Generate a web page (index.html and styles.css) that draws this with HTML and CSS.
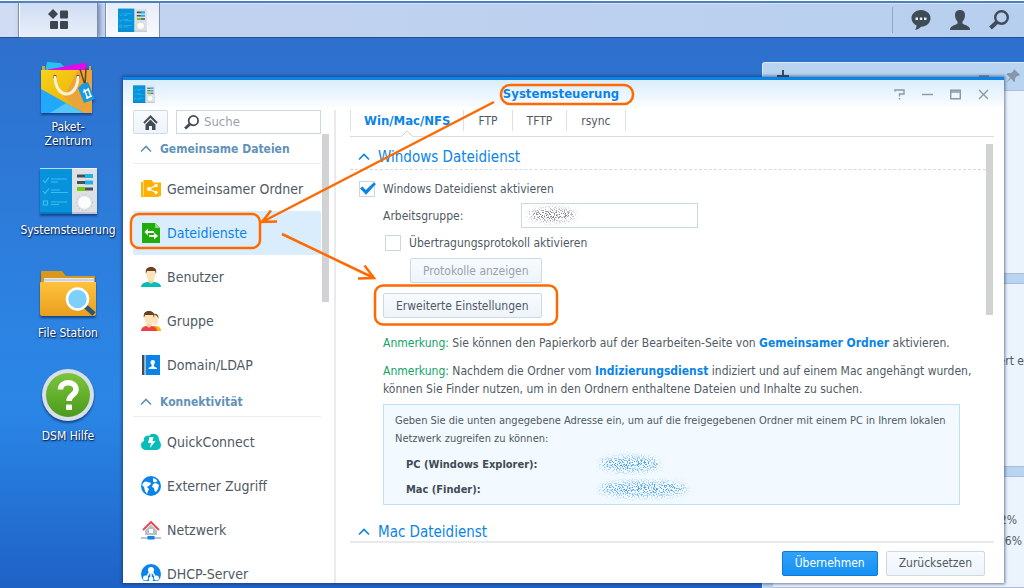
FILE: index.html
```html
<!DOCTYPE html>
<html lang="de">
<head>
<meta charset="utf-8">
<title>Systemsteuerung</title>
<link rel="stylesheet" href="styles.css">
</head>
<body>
<svg class="defs" aria-hidden="true">
  <defs>
    <filter id="grain" x="-15%" y="-40%" width="130%" height="180%">
      <feTurbulence type="fractalNoise" baseFrequency="0.8" numOctaves="3" seed="7" result="n"/>
      <feColorMatrix in="n" type="matrix" values="0 0 0 0 0  0 0 0 0 0  0 0 0 0 0  8 0 0 0 -4" result="m"/>
      <feGaussianBlur in="SourceGraphic" stdDeviation="3" result="b"/>
      <feComposite in="b" in2="m" operator="in"/>
    </filter>
    <linearGradient id="bagGold" x1="0" y1="0" x2="1" y2="1"><stop offset="0" stop-color="#f8d21c"/><stop offset="1" stop-color="#e6a800"/></linearGradient>
    <linearGradient id="folder" x1="0" y1="0" x2="0" y2="1"><stop offset="0" stop-color="#ffc23c"/><stop offset="1" stop-color="#e89f1d"/></linearGradient>
    <linearGradient id="help" x1="0" y1="0" x2="0" y2="1"><stop offset="0" stop-color="#7cc53c"/><stop offset="1" stop-color="#4a9a1c"/></linearGradient>
    <symbol id="panel" viewBox="0 0 57 46">
      <rect width="57" height="46" fill="#dde0e5"/>
      <rect width="32" height="46" fill="#0793dc"/>
      <path d="M0 .5h57" stroke="#fff" stroke-opacity=".7"/>
      <path d="M0 45h32" stroke="#0679c0" stroke-width="2"/><path d="M32 45h25" stroke="#c0c4cc" stroke-width="2"/>
      <g fill="none" stroke="#3fbdf2" stroke-width="1.2"><path d="M3 12l2 2.500 4-5M3 23l2 2.500 4-5M3.500 33h4v4h-4z"/><path d="M11 11h16M11 14h7M11 22h9M11 24.500h17M11 34h16M11 36.500h8"/></g>
      <g><path fill="#4a4f55" d="M37 6.500h8v3h-8zM37 13h8v3h-8zM45 19.500h8v3h-8z"/><path fill="#1cb5ea" d="M45 6h8v4h-8zM45 12.500h8v4h-8z"/><path fill="#72cc12" d="M37 19h8v4h-8z"/></g>
      <circle cx="44.500" cy="34.500" r="8" fill="none" stroke="#b4b8bf" stroke-dasharray="1 2.500"/>
      <circle cx="44.500" cy="34.500" r="6.300" fill="#fdfdfe"/>
    </symbol>
    <symbol id="up" viewBox="0 0 12 8"><path d="M1 6.500l5-5 5 5" fill="none" stroke="currentColor" stroke-width="1.600"/></symbol>
    <symbol id="lens" viewBox="0 0 20 20"><circle cx="12.500" cy="7.500" r="6.300" fill="none" stroke="currentColor" stroke-width="2.400"/><path d="M8 12l-6.500 6" stroke="currentColor" stroke-width="4"/></symbol>
  </defs>
</svg>

<div class="screen">
  <header class="taskbar">
    <span class="taskbar-edge"></span>
    <button class="task task-menu" aria-label="Hauptmenü">
      <svg width="22" height="22" viewBox="0 0 22 22" fill="#3d454e"><path d="M6 0l5 5-5 5-5-5z"/><rect x="13" y="1.500" width="8" height="8" rx="1"/><rect x="3" y="12" width="8" height="8" rx="1"/><rect x="13" y="12" width="8" height="8" rx="1"/></svg>
    </button>
    <button class="task task-app" aria-label="Systemsteuerung öffnen"><svg width="29" height="24"><use href="#panel"/></svg></button>
    <div class="tray">
      <button class="tray-btn" aria-label="Nachrichten"><svg width="20" height="20" viewBox="0 0 20 20"><path d="M10 0C4.500 0 .5 3.700.5 8.300c0 3.200 2 5.900 5 7.200-.1 1.800-.3 3-1.400 4.300C6.800 19.400 8.800 18.200 10 16.700c5.500 0 9.500-3.700 9.500-8.400S15.500 0 10 0z" fill="#3f4b57"/><path fill="#e4edf8" d="M4.500 7.500h2.500v2.500H4.500zM8.800 7.500h2.500v2.500H8.800zM13 7.500h2.500v2.500H13z"/></svg></button>
      <button class="tray-btn" aria-label="Konto"><svg width="20" height="20" viewBox="0 0 20 20"><path d="M10 0c3 0 5 1.800 5 5 0 3-1 5-2.500 6.500v2c1 1.700 7.500 1.500 7.500 6.500H0c0-5 6.500-4.800 7.500-6.500v-2C6 10 5 8 5 5c0-3.200 2-5 5-5z" fill="#3f4b57"/></svg></button>
      <button class="tray-btn" aria-label="Suchen"><svg width="20" height="20" color="#3f4b57" viewBox="0 0 20 20"><use href="#lens"/></svg></button>
    </div>
  </header>

  <main class="desktop">
    <nav class="shortcuts">
      <a class="shortcut" href="#"><span class="shortcut-icon">
        <svg width="56" height="54" viewBox="0 0 56 54">
          <path d="M7 1l13 1 10 8H5z" fill="#25c3f2"/><path d="M8 8.500L46 1.500l1 8.500H8z" fill="#e509ee"/><path d="M2 5h3v6H2zM49 5h2v6h-2z" fill="#d7a33b"/>
          <path d="M1 9h51v43H1z" fill="url(#bagGold)"/><path d="M38 9h14v43H43L24 36z" fill="#eaa43a"/><path d="M1 28l43 24H1z" fill="#21a8fa"/><path d="M26 42l18 10H10z" fill="#54c7f8"/>
          <circle cx="15" cy="16" r="2" fill="#5b3b0b"/><circle cx="38" cy="16" r="2" fill="#5b3b0b"/>
          <path d="M15 15c0 24 23 24 23 0" fill="none" stroke="#fff1d8" stroke-width="3"/>
          <path d="M40 8l5 16 1-17" fill="none" stroke="#6b4412" stroke-width="1.500"/>
          <path d="M38 27l4-4 6-2 7 17-11 4z" fill="#189ae0"/><path d="M44 28l4 10M48 27l3 9M43 31l6-3M46 37l6-2" stroke="#fff" stroke-width="1.400"/>
        </svg></span>Paket-<br>Zentrum</a>
      <a class="shortcut" href="#"><span class="shortcut-icon"><svg width="57" height="46"><use href="#panel"/></svg></span>Systemsteuerung</a>
      <a class="shortcut" href="#"><span class="shortcut-icon">
        <svg width="58" height="48" viewBox="0 0 58 48">
          <path d="M2 2q0-1 1-1h20l4 5h29v12H2z" fill="#d9971c"/><path d="M5 8h50v8H5z" fill="#e6e7ea"/><path d="M5 10h50" stroke="#b9bcc2"/>
          <path d="M1 13q0-1 1-1h55v32q0 2-2 2H3q-2 0-2-2z" fill="url(#folder)"/>
          <path d="M46 36l9 8" stroke="#27587b" stroke-width="5"/><circle cx="38.500" cy="29" r="10.500" fill="#7fd0f8" stroke="#fff" stroke-width="2.500"/>
        </svg></span>File Station</a>
      <a class="shortcut" href="#"><span class="shortcut-icon">
        <svg width="54" height="58" viewBox="0 0 54 58"><circle cx="27" cy="27" r="26" fill="#d8dfea"/><circle cx="27" cy="27" r="22" fill="url(#help)"/><path d="M19.500 21.500c0-9 15.500-9 15.500 0 0 5.500-7 5.500-7 11.500" fill="none" stroke="#fff" stroke-width="5.500"/><rect x="25" y="36.500" width="6" height="5.500" rx="1" fill="#fff"/></svg></span>DSM Hilfe</a>
    </nav>

    <aside class="widgets">
      <div class="widgets-bar">
        <svg width="12" height="14" viewBox="0 0 12 14"><path d="M6 1v12M0 7h12" stroke="#3f4b57" stroke-width="2"/></svg>
        <span class="widgets-tools">
          <svg width="12" height="14" viewBox="0 0 12 14"><path d="M1 7h10" stroke="#8796a8" stroke-width="2"/></svg>
          <svg width="14" height="14" viewBox="0 0 14 14"><path d="M8 0l6 6-2 1-1 0-2 2.500v3L8 13 5 9.500.5 13.500 4 8.500.5 5.500 2 4h3L7.500 2z" fill="#8796a8"/></svg>
        </span>
      </div>
      <section class="widget"></section>
      <section class="widget"><p class="widget-text">Gesichert e</p></section>
      <section class="widget widget-load"><p class="load-cpu">2%</p><p>26%</p></section>
    </aside>

    <section class="window" aria-label="Systemsteuerung">
      <header class="titlebar">
        <svg width="22" height="18"><use href="#panel"/></svg>
        <h1 class="title">Systemsteuerung</h1>
        <div class="controls">
          <button class="control" aria-label="Hilfe"><svg viewBox="0 0 11 11"><path d="M1 2.500V1h9v4H5.500v2.500M5.500 9v1.500"/></svg></button>
          <button class="control" aria-label="Minimieren"><svg viewBox="0 0 11 11"><path d="M0 5.500h11"/></svg></button>
          <button class="control" aria-label="Maximieren"><svg viewBox="0 0 11 11"><path d="M.7 1.200h9.600v8.600H.7zM.7 3h9.600"/></svg></button>
          <button class="control" aria-label="Schließen"><svg viewBox="0 0 11 11"><path d="M1 1l9 9M10 1l-9 9"/></svg></button>
        </div>
      </header>
      <div class="window-body">
        <aside class="sidebar">
          <div class="searchrow">
            <button class="home" aria-label="Start"><svg width="15" height="15" viewBox="0 0 15 15"><path d="M1 8l6.500-6.500L14 8" fill="none" stroke="#434b55" stroke-width="2"/><path d="M2.500 9.500l5-5 5 5V15H9v-4H6v4H2.500z" fill="#434b55"/></svg></button>
            <label class="search"><svg width="15" height="15" viewBox="0 0 20 20" color="#434b55"><use href="#lens"/></svg><input type="text" placeholder="Suche" aria-label="Suche"></label>
          </div>
          <div class="navscroll">
            <nav class="nav">
              <h2 class="group"><svg width="12" height="8"><use href="#up"/></svg>Gemeinsame Dateien</h2>
              <a class="item" href="#"><svg viewBox="0 0 20 20"><path d="M0 3h2v14h16v1H0z" fill="#ffb400"/><path d="M2.500 1h8l2 2.500H20V17H2.500z" fill="#ffb000"/><path d="M8 10l7-3.500M8 10l7 3.500" stroke="#fff" stroke-width="1.300"/><g fill="#fff"><circle cx="8" cy="10" r="2"/><circle cx="15" cy="6.500" r="1.700"/><circle cx="15" cy="13.500" r="1.700"/></g></svg>Gemeinsamer Ordner</a>
              <a class="item item-active" href="#"><svg viewBox="0 0 20 20"><path d="M1 0h13l5 5v15H1z" fill="#1fad0c"/><path d="M14 0l5 5h-5z" fill="#8bdc7c"/><path d="M7 5.500L3.500 9 7 12.500V10h6V8H7zM13 9.500l4 3.500-4 3.500V14H8v-2h5z" fill="#fff"/></svg>Dateidienste</a>
              <a class="item" href="#"><svg viewBox="0 0 20 20"><path d="M0 20q0-4 6-5h8q6 1 6 5z" fill="#07bdb9"/><path d="M7.500 11h5v4q-2.500 3-5 0z" fill="#f5d3a2"/><ellipse cx="10" cy="7.500" rx="4.500" ry="6" fill="#ffe3b8"/><path d="M5 7c-1-5 1-7 5-7s6 2 5 7l-1-3H6z" fill="#6c4120"/></svg>Benutzer</a>
              <a class="item" href="#"><svg viewBox="0 0 20 20"><path d="M12 20v-5h4q4 1 4 5z" fill="#ffb400"/><ellipse cx="14" cy="9" rx="3" ry="5" fill="#ffe3b8"/><path d="M12 3q6-1 5.500 5L16 5z" fill="#6c4120"/><path d="M0 20q0-4 5-5h6q5 1 5 5z" fill="#f33d46"/><path d="M5.500 11h5v4q-2.500 3-5 0z" fill="#f5d3a2"/><ellipse cx="8" cy="7.500" rx="4.500" ry="6" fill="#ffe3b8"/><path d="M3 7c-1-5 1-7 5-7s6 2 5 7l-1-3H4z" fill="#6c4120"/></svg>Gruppe</a>
              <a class="item" href="#"><svg viewBox="0 0 20 20"><path d="M1 0h2.500v20H1z" fill="#434b55"/><path d="M4.500 0H19v20H4.500z" fill="#0a84e8"/><path d="M11.800 5c3 0 2.500 3.500 1 5v1.200c.8 1 3.200.6 3.200 2.800H7.500c0-2.200 2.500-1.800 3.200-2.800V10c-1.500-1.500-2-5 1.100-5z" fill="#fff"/></svg>Domain/LDAP</a>
              <h2 class="group"><svg width="12" height="8"><use href="#up"/></svg>Konnektivität</h2>
              <a class="item" href="#"><svg viewBox="0 0 20 20"><path d="M4 18q-4-1-4-5 0-3 3-4-1-3 2-5 2-1 3 0 2-3 6-2 4 1 4 6 2 2 2 5 0 4-4 5z" fill="#07bdb9"/><path d="M8.500 5h4l-1 4h3l-5.500 7 1-5h-3z" fill="#fff"/></svg>QuickConnect</a>
              <a class="item" href="#"><svg viewBox="0 0 20 20"><circle cx="10" cy="10" r="10" fill="#0a84e8"/><path d="M3 6q2-1 4 0l3 1-1 2-3 2 2 2-1 2-1 3-2-3-1-4-2-2zM12 2q3 .5 4.500 3L14 6.500l-2-1zM12 8l3-1 3 2-1 4-2 3-1.500-1-.5-3-2-1z" fill="#fff"/></svg>Externer Zugriff</a>
              <a class="item" href="#"><svg viewBox="0 0 20 20"><path d="M2 10l8-8 8 8" fill="none" stroke="#f33d46" stroke-width="1.800"/><path d="M4 10.500l6-6 6 6V15H4z" fill="#b7bfcb"/><path d="M8 9h4v4H8z" fill="#fff"/><path d="M0 18h20" stroke="#98a4b4" stroke-width="1.300"/><rect x="6.500" y="16" width="7" height="3.500" fill="#0a84e8"/></svg>Netzwerk</a>
              <a class="item" href="#"><svg viewBox="0 0 20 20"><circle cx="10" cy="10" r="10" fill="#0a84e8"/><path d="M10 6L5 14M10 6l5 8M10 6v9" stroke="#fff" stroke-width="1.500"/><g fill="#fff"><circle cx="10" cy="6" r="3"/><circle cx="4.500" cy="14" r="2.500"/><circle cx="15.500" cy="14" r="2.500"/><circle cx="10" cy="15" r="2.300"/></g></svg>DHCP-Server</a>
            </nav>
            <span class="thumb thumb-nav"></span>
          </div>
        </aside>

        <div class="pane">
          <div class="tabs" role="tablist">
            <button class="tab tab-active" role="tab" aria-selected="true">Win/Mac/NFS<svg class="notch" width="14" height="8" viewBox="0 0 14 8"><path d="M0 7l7-6 7 6v1H0z" fill="#fff"/><path d="M1 7l6-6 6 6" fill="none" stroke="#d3d7db"/></svg></button>
            <button class="tab" role="tab">FTP</button>
            <button class="tab" role="tab">TFTP</button>
            <button class="tab" role="tab">rsync</button>
          </div>
          <div class="content">
            <div class="scroller">
              <h2 class="section"><button class="section-btn"><svg width="12" height="8"><use href="#up"/></svg>Windows Dateidienst</button></h2>
              <div class="form">
                <label class="check"><input type="checkbox" checked>Windows Dateidienst aktivieren</label>
                <div class="field"><label for="workgroup">Arbeitsgruppe:</label>
                  <span class="textbox"><input id="workgroup" type="text"><svg class="smudge" width="70" height="22" viewBox="0 0 70 22"><ellipse cx="29" cy="11" rx="23" ry="6" fill="#6d7078" filter="url(#grain)"/></svg></span></div>
                <label class="check check-sub"><input type="checkbox">Übertragungsprotokoll aktivieren</label>
                <button class="btn btn-sub" disabled>Protokolle anzeigen</button>
                <button class="btn btn-main">Erweiterte Einstellungen</button>
                <p class="note"><span class="note-label">Anmerkung:</span> Sie können den Papierkorb auf der Bearbeiten-Seite von <a href="#">Gemeinsamer Ordner</a> aktivieren.</p>
                <p class="note"><span class="note-label">Anmerkung:</span> Nachdem die Ordner vom <a href="#">Indizierungsdienst</a> indiziert und auf einem Mac angehängt wurden, können Sie Finder nutzen, um in den Ordnern enthaltene Dateien und Inhalte zu suchen.</p>
                <div class="info">
                  <p>Geben Sie die unten angegebene Adresse ein, um auf die freigegebenen Ordner mit einem PC in Ihrem lokalen Netzwerk zugreifen zu können:</p>
                  <dl class="addresses">
                    <dt>PC (Windows Explorer):</dt><dd><svg width="110" height="24" viewBox="0 0 110 24"><ellipse cx="34" cy="12" rx="30" ry="7" fill="#3c9bea" filter="url(#grain)"/></svg></dd>
                    <dt>Mac (Finder):</dt><dd><svg width="110" height="24" viewBox="0 0 110 24"><ellipse cx="47" cy="12" rx="44" ry="7" fill="#3c9bea" filter="url(#grain)"/></svg></dd>
                  </dl>
                </div>
              </div>
              <h2 class="section"><button class="section-btn"><svg width="12" height="8"><use href="#up"/></svg>Mac Dateidienst</button></h2>
            </div>
            <span class="thumb thumb-content"></span>
          </div>
          <footer class="actions">
            <button class="btn btn-primary">Übernehmen</button>
            <button class="btn btn-reset">Zurücksetzen</button>
          </footer>
        </div>
      </div>
    </section>

    <svg class="marks" width="1024" height="550" viewBox="0 38 1024 550" aria-hidden="true" fill="none" stroke="#ff6a00">
      <rect x="501" y="85" width="132" height="19" rx="9" stroke-width="2.500"/>
      <rect x="131" y="214" width="129" height="34" rx="8" stroke-width="2.500"/>
      <rect x="375" y="285.500" width="182" height="39" rx="8" stroke-width="2.500"/>
      <path d="M494 102L262 222M271 210.500L262 222l15-.5" stroke-width="2.500"/>
      <path d="M282 234L374 278M364.500 265.500L374 278l-16 .5" stroke-width="2.500"/>
    </svg>
  </main>
</div>
</body>
</html>
```
FILE: styles.css
```css
* { box-sizing: border-box; }
body { margin: 0; font: 12px/18px "DejaVu Sans Condensed", "DejaVu Sans", Verdana, sans-serif; color: #505a64; }
h1, h2, p, dl, dd { margin: 0; }
button, input { font: inherit; color: inherit; }
button { padding: 0; border: 0; background: none; }
a { color: inherit; text-decoration: none; }
svg { flex: none; display: block; }
.defs { position: absolute; width: 0; height: 0; }

.screen { height: 100vh; overflow: hidden; display: flex; flex-direction: column; background: linear-gradient(180deg, #2e6dc9 0, #2c83e2 55%, #2a86e6 70%, #1f62c6 100%); }

/* Taskbar */
.taskbar { flex: none; height: 37px; display: flex; align-items: stretch; margin-top: 1px; border-top: 2px solid #4b80c0; border-bottom: 1px solid #1f4f98; background: linear-gradient(90deg, #c3d3f0, #b7cfee); box-shadow: 0 -1px #fff, inset 0 1px #d6e3f6; }
.taskbar-edge { width: 18px; background: #cfdcf3; }
.task { display: flex; align-items: center; justify-content: center; border: solid #7d8eb0; border-width: 0 1px; background: linear-gradient(180deg, #cfdcf2, #e8effa); box-shadow: inset 1px 0 #fff; }
.task-menu { width: 80px; margin-right: 7px; box-shadow: inset 1px 0 #fff, 2px 0 4px #7488b0; }
.task-app { width: 55px; background: linear-gradient(180deg, #e6edf9, #f8fafd); }
.tray { display: flex; align-items: center; gap: 19px; margin: 4px 15px 4px auto; padding-left: 18px; border-left: 1px solid #8ea6ca; }
.tray-btn { width: 20px; height: 20px; }

/* Desktop */
.desktop { flex: 1; min-height: 0; position: relative; }
.shortcuts { width: 136px; padding-top: 24px; display: flex; flex-direction: column; gap: 17px; }
.shortcut { min-height: 86px; text-align: center; line-height: 14px; color: #fff; text-shadow: 1px 1px 1px #0b2e63, 0 1px 2px #0b2e63; }
.shortcut-icon { height: 52px; margin-bottom: 6px; display: flex; align-items: center; justify-content: center; filter: drop-shadow(0 2px 1px #14448c); }

.widgets { position: absolute; top: 24px; right: 0; bottom: 0; width: 262px; display: flex; flex-direction: column; gap: 9px; padding-left: 10px; border-radius: 3px 0 0 0; background: #b8d4f1; border-left: 1px solid #dce9f8; border-top: 1px solid #dce9f8; }
.widgets-bar { height: 18px; display: flex; justify-content: space-between; align-items: center; padding: 8px 4px 0 4px; }
.widgets-tools { display: flex; gap: 16px; }
.widget { height: 184px; background: #ebf3fd; border: solid #a9bfd9; border-width: 1px 0; text-align: right; overflow: hidden; }
.widget-text { padding-top: 68px; }
.widget-load { height: auto; flex: 1; padding: 33px 2px 0 0; line-height: 21px; }
.load-cpu { padding-right: 5px; }

/* Window */
.window { position: absolute; top: 39px; left: 123px; right: 20px; bottom: 5px; display: flex; flex-direction: column; background: #fff; border-top: 3px solid #0b84e8; box-shadow: 0 0 3px 1px rgba(20, 40, 80, .6); }
.titlebar { flex: none; height: 30px; padding: 0 15px 2px 10px; display: grid; grid-template-columns: 1fr auto 1fr; align-items: center; background: linear-gradient(180deg, #d9edfc, #fff); }
.title { font-size: 13px; line-height: 18px; color: #0a84e8; }
.controls { display: flex; justify-content: flex-end; gap: 17px; }
.control { width: 11px; height: 11px; }
.control svg { width: 11px; height: 11px; fill: none; stroke: #8b98a6; stroke-width: 1.4; }
.window-body { flex: 1; min-height: 0; display: flex; }

/* Sidebar */
.sidebar { flex: none; width: 213px; padding-left: 10px; display: flex; flex-direction: column; border-right: 2px solid #e8eaed; }
.searchrow { flex: none; display: flex; gap: 8px; padding-right: 13px; height: 24px; }
.home { width: 35px; display: flex; align-items: center; justify-content: center; border: 1px solid #cfdbe7; border-radius: 2px; background: linear-gradient(180deg, #f8fbfe, #eef4fa); }
.search { flex: 1; min-width: 0; display: flex; align-items: center; gap: 5px; padding-left: 7px; border: 1px solid #cad7e4; }
.search input { width: 100%; min-width: 0; border: 0; padding: 0; outline: 0; background: none; font-size: 13px; }
.search input::placeholder { color: #9aa3ac; }
.navscroll { flex: 1; min-height: 0; display: flex; overflow: hidden; margin: 0 5px 2px 0; }
.nav { flex: 1; margin-right: 1px; }
.group { display: flex; align-items: center; gap: 8px; padding: 1px 0 0 7px; margin-bottom: 3px; height: 30px; border-bottom: 1px solid #e8edf3; font-size: 12px; line-height: 18px; color: #6192b9; }
.item { height: 44px; display: flex; align-items: center; gap: 6px; padding-left: 8px; border-radius: 2px; font-size: 14px; }
.item svg { width: 20px; height: 20px; }
.item-active { background: #d9edfd; color: #0a84e8; }
.thumb { flex: none; width: 7px; background: #d0d2d4; }
.thumb-nav { height: 168px; }

/* Content pane */
.pane { flex: 1; min-width: 0; padding: 0 10px 0 14px; display: flex; flex-direction: column; }
.tabs { flex: none; height: 27px; display: flex; align-items: flex-start; border-bottom: 1px solid #dadcde; }
.tab { position: relative; height: 21px; padding: 0 14px; border-right: 1px solid #d9e0e8; }
.tab-active { padding: 0 13px; border-left: 1px solid #d9e0e8; font-size: 13px; font-weight: bold; color: #0a84e8; }
.notch { position: absolute; left: 50%; top: 20px; margin-left: -7px; }
.content { flex: 1; min-height: 0; display: flex; overflow: hidden; border-bottom: 2px solid #e8e9ea; }
.scroller { flex: 1; min-width: 0; padding-top: 7px; }
.thumb-content { margin: 7px 1px 0 0; height: 171px; }
.section { border-bottom: 1px dashed #d3dbe6; font-weight: normal; font-size: 15px; }
.section-btn { display: flex; align-items: center; gap: 8px; height: 25px; padding-left: 8px; color: #0a84e8; }
.form { padding: 10px 26px 14px 33px; display: flex; flex-direction: column; align-items: flex-start; }
.check { display: flex; align-items: center; gap: 8px; height: 18px; margin-left: -24px; }
.check-sub { margin: 6px 0 6px 2px; }
.check input { appearance: none; width: 16px; height: 16px; margin: 0; border: 1px solid #c9d6e3; background: #fff; }
.check input:checked::before { content: ""; display: block; width: 16px; height: 13px; background: #0a84e8; clip-path: polygon(0 50%, 16% 34%, 36% 62%, 86% 4%, 100% 16%, 38% 98%); }
.field { width: 100%; display: flex; align-items: center; margin-top: 5px; }
.field label { width: 138px; }
.textbox { position: relative; display: flex; width: 177px; }
.textbox input { width: 100%; height: 25px; padding: 0 6px; border: 1px solid #cad7e4; background: #fff; }
.smudge { position: absolute; left: 2px; top: 1px; }
.btn { height: 25px; padding: 0 12px; border: 1px solid #ccd9e6; border-radius: 2px; background: linear-gradient(180deg, #f8fbfe, #edf4fa); }
.btn-sub { margin-left: 27px; color: #9aa3ac; }
.btn-main { margin: 10px 0 16px; }
.note { margin: 0 -20px 10px 0; }
.note-label { color: #12a366; }
.note a { color: #0a84e8; font-weight: bold; }
.info { align-self: stretch; margin-top: -4px; padding: 7px 11px 2px; border: 1px solid #bfe0f5; background: #f2f9ff; font-size: 11px; }
.addresses { display: grid; grid-template-columns: 190px 1fr; padding: 4px 0 0 11px; line-height: 25px; font-weight: bold; color: #414b55; }
.addresses dt, .addresses dd { height: 25px; }
.actions { flex: none; height: 40px; display: flex; justify-content: flex-end; align-items: center; gap: 8px; padding-right: 9px; }
.btn-primary { border-color: #0a7cd8; background: linear-gradient(180deg, #31a2fa, #1590f2); color: #fff; }

/* Annotations over the windows */
.marks { position: absolute; top: 0; left: 0; pointer-events: none; }
```
